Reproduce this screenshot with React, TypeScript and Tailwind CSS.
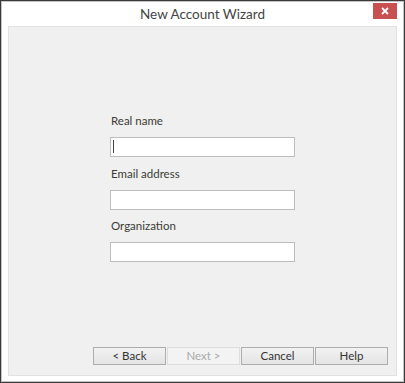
import React from "react";

const font = { fontFamily: 'Lato, "Open Sans", sans-serif' };

function Field({ label, caret, gap }: { label: string; caret?: boolean; gap: string }) {
  return (
    <div className={"flex flex-col " + gap}>
      <label className="h-4 pl-[1px] text-[11.5px] leading-4 text-[#3b3b33]">{label}</label>
      <div className="relative mt-2 h-5 w-[185px] border border-[#bdbdbd] bg-white">
        {caret && <span className="absolute left-[2px] top-[2px] h-[13px] w-px bg-[#444]" />}
      </div>
    </div>
  );
}

function Btn({ children, disabled }: { children: React.ReactNode; disabled?: boolean }) {
  return (
    <button
      className={
        disabled
          ? "h-[18px] w-[73px] border border-[#dedede] bg-[#f3f3f3] text-[11.5px] leading-4 text-[#a9a9a9]"
          : "h-[18px] w-[73px] border border-[#adadad] bg-gradient-to-b from-[#f2f2f2] to-[#e4e4e4] text-[11.5px] leading-4 text-[#333]"
      }
    >
      {children}
    </button>
  );
}

export default function App() {
  return (
    <div style={font} className="h-[383px] w-[405px] border border-[#3a3a3a]">
      <div className="flex h-full flex-col border border-[#c4c4c4] bg-white px-[6px]">
        <div className="relative flex h-6 items-center justify-center">
          <span className="text-[13.5px] text-[#444]">New Account Wizard</span>
          <div className="absolute right-0 top-px flex h-4 w-6 items-center justify-center bg-[#c75050]">
            <svg width="8" height="8" viewBox="0 0 8 8">
              <path d="M1 1 L7 7 M7 1 L1 7" stroke="#fff" strokeWidth="1.8" />
            </svg>
          </div>
        </div>
        <div className="flex h-[350px] flex-col border border-[#e2e2e2] bg-[#f0f0f0]">
          <div className="ml-[101px] mt-[86px] flex flex-col">
            <Field label="Real name" caret gap="mt-0" />
            <Field label="Email address" gap="mt-[9px]" />
            <Field label="Organization" gap="mt-2" />
          </div>
          <div className="mt-auto mb-[10px] mr-[8px] flex justify-end gap-px">
            <Btn>&lt; Back</Btn>
            <Btn disabled>Next &gt;</Btn>
            <Btn>Cancel</Btn>
            <Btn>Help</Btn>
          </div>
        </div>
      </div>
    </div>
  );
}
